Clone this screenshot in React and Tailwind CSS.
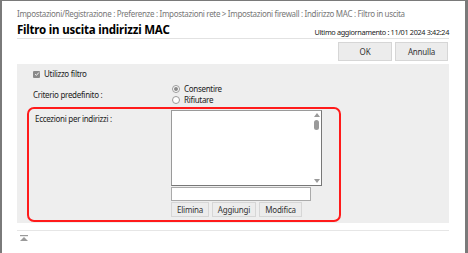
import { useState } from "react";

const font = { fontFamily: '"Noto Sans", "Liberation Sans", sans-serif' };

function Btn({ children, className = "" }) {
  return (
    <button
      className={`h-[15px] border border-[#d6d6d6] bg-[#ececec] text-[8px] leading-none text-[#333] tracking-[-0.2px] ${className}`}
    >
      {children}
    </button>
  );
}

export default function App() {
  const [mode, setMode] = useState("allow");

  return (
    <div
      style={font}
      className="h-[253px] w-[468px] overflow-hidden bg-white border-t border-l-2 border-r-[3px] border-[#7a7a7a] text-[#333]"
    >
      <div className="pl-[15px] pr-[16px] pt-[7px]">
        {/* breadcrumb */}
        <div className="text-[8px] leading-[12px] text-[#777] tracking-[-0.32px] whitespace-nowrap">
          Impostazioni/Registrazione : Preferenze : Impostazioni rete &gt; Impostazioni firewall : Indirizzo MAC : Filtro in uscita
        </div>

        {/* title row */}
        <div className="mt-[2px] flex items-end justify-between border-b border-[#e2e2e2] pb-[1px]">
          <h1 className="text-[11.5px] font-bold leading-[15px] text-black tracking-[-0.2px]">Filtro in uscita indirizzi MAC</h1>
          <span className="text-[7.3px] leading-[10px] text-[#222] tracking-[-0.35px]">Ultimo aggiornamento : 11/01 2024 3:42:24</span>
        </div>

        {/* actions */}
        <div className="mt-[3px] flex justify-end gap-[3px] pr-[1px]">
          <Btn className="w-[54px] h-[19px]">OK</Btn>
          <Btn className="w-[53px] h-[19px]">Annulla</Btn>
        </div>

        {/* settings panel */}
        <div className="mt-[3px] h-[159px] bg-[#eeeeee] pt-[4px] pl-[16px] pr-[108px] text-[8px] tracking-[-0.3px] text-[#222]">
          <label className="flex items-center gap-[4px] leading-[12px]">
            <span className="flex h-[7px] w-[7px] items-center justify-center rounded-[1px] bg-[#8a8a8a]">
              <svg viewBox="0 0 8 8" className="h-[6px] w-[6px]">
                <path d="M1.5 4.2 L3.2 5.8 L6.5 2" fill="none" stroke="white" strokeWidth="1.2" />
              </svg>
            </span>
            Utilizzo filtro
          </label>

          <div className="mt-[3px] flex">
            <div className="w-[139px] pt-[6px] leading-[12px]">Criterio predefinito :</div>
            <div className="flex flex-col leading-[11px]">
              {[
                ["allow", "Consentire"],
                ["deny", "Rifiutare"],
              ].map(([k, label]) => (
                <label key={k} className="flex items-center gap-[4px]" onClick={() => setMode(k)}>
                  <span className="flex h-[8px] w-[8px] items-center justify-center rounded-full border border-[#9a9a9a] bg-white">
                    {mode === k && <span className="h-[4px] w-[4px] rounded-full bg-[#8a8a8a]" />}
                  </span>
                  {label}
                </label>
              ))}
            </div>
          </div>

          {/* highlighted exceptions block */}
          <div className="-ml-[6px] mt-[2px] flex h-[115px] rounded-[7px] border-2 border-[#ff1a1a] pl-[6px] pt-[1px]">
            <div className="w-[136px] pt-[3px] leading-[12px]">Eccezioni per indirizzi :</div>
            <div className="flex flex-col">
              <div className="flex h-[76px] w-[151px] border border-[#9a9a9a] border-r-[#777] border-b-[#777] bg-white">
                <div className="flex-1" />
                <div className="flex w-[9px] flex-col items-center pt-[2px] pb-[2px]">
                  <svg viewBox="0 0 6 4" className="h-[4px] w-[6px]">
                    <path d="M0 4 L3 0 L6 4 Z" fill="#9a9a9a" />
                  </svg>
                  <span className="mt-[3px] h-[10px] w-[5px] rounded-full bg-[#9a9a9a]" />
                  <span className="flex-1" />
                  <svg viewBox="0 0 6 4" className="h-[4px] w-[6px]">
                    <path d="M0 0 L6 0 L3 4 Z" fill="#9a9a9a" />
                  </svg>
                </div>
              </div>
              <div className="mt-[1px] h-[14px] w-[140px] border border-[#aaa] bg-white" />
              <div className="mt-[1px] flex gap-[3px]">
                <Btn className="w-[38px]">Elimina</Btn>
                <Btn className="w-[44px]">Aggiungi</Btn>
                <Btn className="w-[43px]">Modifica</Btn>
              </div>
            </div>
          </div>
        </div>

        {/* footer */}
        <div className="mt-[7px] border-t border-[#e6e6e6] pt-[4px] pl-[3px]">
          <svg viewBox="0 0 8 7" className="h-[7px] w-[8px]">
            <rect x="0" y="0" width="8" height="1.2" fill="#9a9a9a" />
            <path d="M4 2 L8 6 L0 6 Z" fill="#9a9a9a" />
          </svg>
        </div>
      </div>
    </div>
  );
}
